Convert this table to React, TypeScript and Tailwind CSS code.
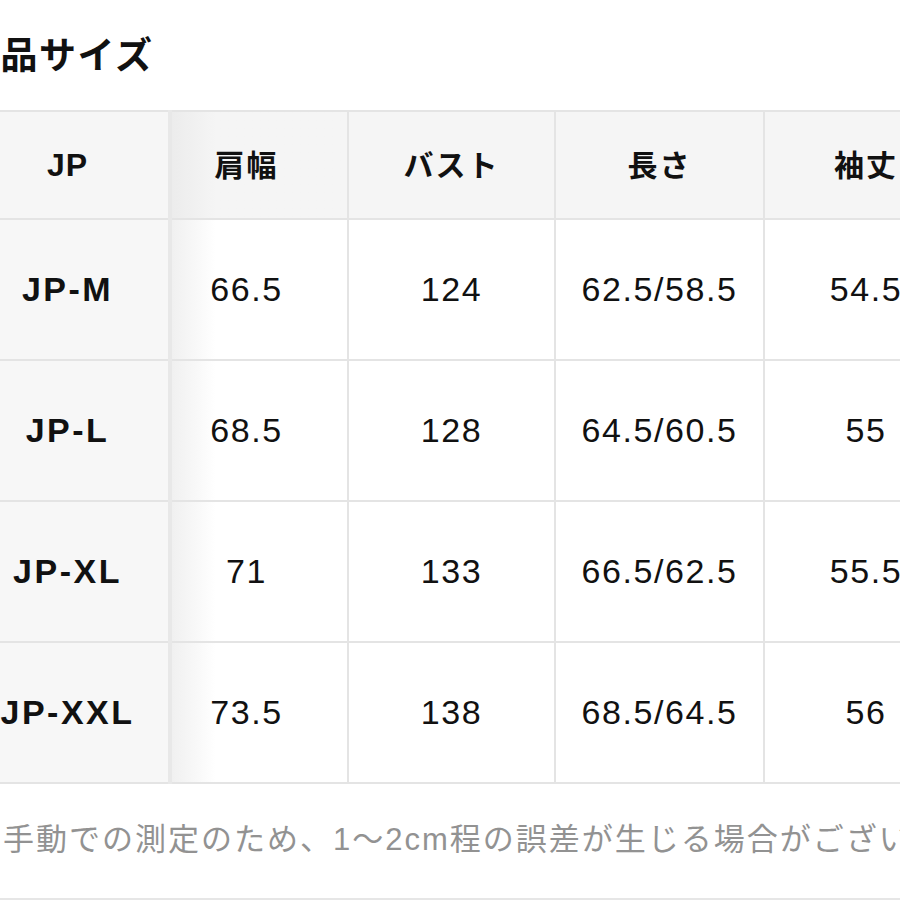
const headers = ['JP', '肩幅', 'バスト', '長さ', '袖丈'];

const rows: string[][] = [
  ['JP-M', '66.5', '124', '62.5/58.5', '54.5'],
  ['JP-L', '68.5', '128', '64.5/60.5', '55'],
  ['JP-XL', '71', '133', '66.5/62.5', '55.5'],
  ['JP-XXL', '73.5', '138', '68.5/64.5', '56'],
];

const widths = ['w-[204px]', 'w-[178px]', 'w-[207px]', 'w-[209px]', 'w-[204px]'];

export default function App() {
  return (
    <div className="w-[900px] h-[900px] overflow-hidden bg-white font-['Liberation_Sans','Noto_Sans_CJK_JP',sans-serif] text-[#111]">
      <div className="-ml-[35px] w-[1010px]">
        {/* title */}
        <div className="h-[110px] pt-[33px]">
          <h2 className="-ml-[3px] text-[37px] leading-[48px] font-bold tracking-[1.5px]">商品サイズ</h2>
        </div>

        <table className="table-fixed border-collapse">
          <colgroup>
            {widths.map((w, i) => (
              <col key={i} className={w} />
            ))}
          </colgroup>
          <thead>
            <tr className="h-[108px] bg-[#f5f5f5]">
              {headers.map((h, i) => (
                <th
                  key={h}
                  className={`border-2 border-[#e4e4e4] font-bold text-center align-middle ${
                    i === 0
                      ? 'border-r-[4px] border-r-[#e8e8e8] bg-[#f6f6f6] text-[32px] tracking-[1px]'
                      : 'text-[30px] tracking-[2px]'
                  } ${i === 1 ? 'pr-[26px] bg-gradient-to-r from-[#ececec] via-[#f5f5f5] via-[25%] to-[#f5f5f5]' : ''}`}
                >
                  {h}
                </th>
              ))}
            </tr>
          </thead>
          <tbody>
            {rows.map(r => (
              <tr key={r[0]} className="h-[141px]">
                {r.map((v, i) =>
                  i === 0 ? (
                    <th
                      key={i}
                      className="border-2 border-r-[4px] border-[#e4e4e4] border-r-[#e8e8e8] bg-[#f7f7f7] text-[34px] font-bold tracking-[2.5px] text-center align-middle whitespace-nowrap"
                    >
                      {v}
                    </th>
                  ) : (
                    <td
                      key={i}
                      className={`border-2 border-[#e4e4e4] text-[34px] tracking-[1.6px] text-center align-middle whitespace-nowrap ${
                        i === 1 ? 'pr-[26px] bg-gradient-to-r from-[#f0f0f0] via-white via-[25%] to-white' : ''
                      }`}
                    >
                      {v}
                    </td>
                  )
                )}
              </tr>
            ))}
          </tbody>
        </table>

        {/* note */}
        <div className="h-[116px] border-b-2 border-[#e6e6e6] pt-[34px] pl-[5px]">
          <p className="text-[31px] leading-[44px] tracking-[2px] text-[#929292] whitespace-nowrap">
            ※手動での測定のため、1〜2cm程の誤差が生じる場合がございます。
          </p>
        </div>
      </div>
    </div>
  );
}
